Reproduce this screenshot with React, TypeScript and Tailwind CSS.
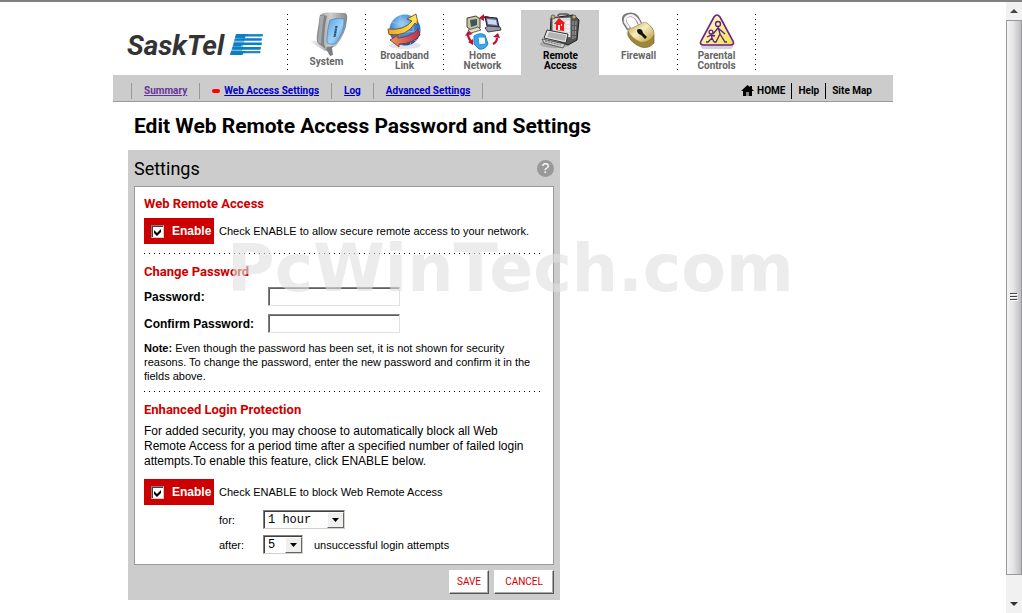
import type { ReactNode } from "react";

const narrow = "font-[Roboto,'Liberation_Sans',sans-serif]";
const dotsY = "bg-[repeating-linear-gradient(to_bottom,#000_0px,#000_1px,transparent_1px,transparent_5px)]";
const dotsX = "bg-[repeating-linear-gradient(to_right,#000_0px,#000_1px,transparent_1px,transparent_5px)]";

function Logo() {
  return (
    <svg width="136" height="32" viewBox="0 0 136 32" role="img" aria-label="SaskTel">
      <text x="0" y="26" fontFamily="Roboto, Liberation Sans, sans-serif" fontWeight="bold" fontStyle="italic" fontSize="28" fill="#333">
        SaskTel
      </text>
      <path d="M109 5h10l-1 4-1 4.500-1 4.500-2 8h-11z" fill="#7fbde2" />
      <g fill="#0a7fc4">
        <path d="M109 5h27l-.400 2.500H108.500z" />
        <path d="M108.500 7h10l-.500 2h-10zM118 9.300h17l-.500 2.500H107.500l.300-2z" />
        <path d="M107 13.500h28l-.500 2.500H106.500z" />
        <path d="M106.500 15.500h8l-.500 2h-8zM105.500 18h28.500l-.500 2.700H105z" />
        <path d="M104 22h29.500l-.500 2.300H103.500zM103.500 24h13l-1 2h-12.500z" />
      </g>
      <path d="M121 5.800h14.500M118 22.900h14" stroke="#4aa3d8" strokeWidth=".7" />
    </svg>
  );
}

function SystemIcon() {
  return (
    <svg width="42" height="44" viewBox="0 0 42 44" aria-hidden="true">
      <defs>
        <linearGradient id="sysBody" x1="0" x2="1">
          <stop offset="0" stopColor="#8d9095" />
          <stop offset=".45" stopColor="#cfd0ce" />
          <stop offset="1" stopColor="#85878a" />
        </linearGradient>
        <linearGradient id="sysFace" x1="0" y1="0" x2="1" y2="1">
          <stop offset="0" stopColor="#5b9fe0" />
          <stop offset=".55" stopColor="#9cd2f8" />
          <stop offset="1" stopColor="#4a8cd4" />
        </linearGradient>
        <linearGradient id="sysShade" x1="0" x2="1">
          <stop offset="0" stopColor="#fff" />
          <stop offset="1" stopColor="#a8a8a8" />
        </linearGradient>
      </defs>
      <path d="M3 29l10 0 9 9-3 1-8-5z" fill="url(#sysShade)" />
      <path d="M14 3Q17 0 23 .600L39 1q3 1 2 7-1 13-11 26l-5 2 1 6-3 1-2-5-9-7q-2-1-1-9z" fill="url(#sysBody)" />
      <path d="M14 3q4 0 7 1-3 12-3 28l2 5-7-5q-2-1-1-9z" fill="#808388" />
      <path d="M14 4q2-1 4 0-2 12-3 28l-2-1q-2-1 0-12z" fill="#a5a8aa" />
      <path d="M24 8q8-3 14-1 1 13-9 25-5 1-8-1 0-14 3-23z" fill="url(#sysFace)" stroke="#4c83bd" strokeWidth=".7" />
      <path d="M30 14l-2 11M31 14l-2 11" stroke="#2c4c78" strokeWidth="1.300" strokeDasharray="2 .6" />
      <path d="M21 35l7-1-2 2 1 7-3 1-2-4-2-2z" fill="#7c7e80" />
    </svg>
  );
}

function BroadbandIcon() {
  return (
    <svg width="38" height="38" viewBox="0 0 38 38" aria-hidden="true">
      <defs>
        <radialGradient id="globe" cx=".4" cy=".3" r=".75">
          <stop offset="0" stopColor="#a7d6fa" />
          <stop offset=".5" stopColor="#438ad8" />
          <stop offset="1" stopColor="#124b9c" />
        </radialGradient>
        <linearGradient id="arrowGold">
          <stop offset="0" stopColor="#f0a51e" />
          <stop offset="1" stopColor="#ffe867" />
        </linearGradient>
        <linearGradient id="arrowRust">
          <stop offset="0" stopColor="#f09358" />
          <stop offset="1" stopColor="#b52f55" />
        </linearGradient>
      </defs>
      <ellipse cx="19" cy="33.500" rx="16" ry="3.500" fill="#e1e4e8" />
      <circle cx="19" cy="18" r="15.500" fill="url(#globe)" />
      <path d="M6 10q12 5 25-2M4 18q14 4 30 0M7 28q12 3 24 0M15 3q-7 14 1 30M23 3q8 14 1 30" stroke="#8fc2ef" fill="none" strokeWidth=".8" />
      <path d="M2 17Q18 19 26 9l-5-2 9-5q2 5 1 11l-2-2Q21 25 3 22.500z" fill="url(#arrowGold)" stroke="#7c4b12" strokeWidth=".9" />
      <path d="M4 28l8-5v3q13-1 20-9l2 6q-7 9-21 9v3z" fill="url(#arrowRust)" stroke="#7c2c28" strokeWidth=".8" />
    </svg>
  );
}

function NetworkIcon() {
  return (
    <svg width="38" height="36" viewBox="0 0 38 36" aria-hidden="true">
      <g fill="none" stroke="#c41030" strokeWidth="2.200">
        <path d="M18 4q4-2 7 0" />
        <path d="M33 24q0 4-4 6" />
        <path d="M4 20q0 6 5 8" />
      </g>
      <path d="M15 4l5-4v7zM29 23l5-4 2 5zM1 22l3-5 5 3zM9 25v6l-5-3z" fill="#c41030" />
      <path d="M3 4l9-2 4 3v9L7 16l-4-3z" fill="#c9c79a" stroke="#33332b" strokeWidth=".9" />
      <path d="M6 6l7-1v6l-6 2z" fill="#3d5566" />
      <path d="M4 16l10-3 3 3-10 3z" fill="#e0dfc6" stroke="#444" strokeWidth=".8" />
      <path d="M21 3l12 1 2 9-12-1z" fill="#5f6a92" stroke="#1d1d2b" />
      <path d="M23 5l9 1 1 5-9-1z" fill="#cfd9ee" />
      <path d="M21 14l3-2 12 1 1 3-13 2z" fill="#9698ae" stroke="#222" strokeWidth=".8" />
      <path d="M10 22q6-4 11-1l3 9q-3 6-9 5l-5-5z" fill="#3aa9ec" stroke="#1b86cc" />
      <path d="M14 23l7 0 1 7-7 1z" fill="#f2fbff" stroke="#2f8fc8" />
    </svg>
  );
}

function RemoteIcon() {
  return (
    <svg width="42" height="38" viewBox="0 0 42 38" aria-hidden="true">
      <ellipse cx="15" cy="32" rx="15" ry="4" fill="#a9a9a9" />
      <path d="M11 6l22-3 6 5-2 20-9 5-18-7z" fill="#555" stroke="#1b1b1b" />
      <path d="M12 6l19-1v21l-19-3z" fill="#dcdcdc" stroke="#555" />
      <path d="M18 4q0-2 3-2h5q3 0 3 2" fill="none" stroke="#555" strokeWidth="1.500" />
      <circle cx="13" cy="5" r="2" fill="#c9b36b" stroke="#333" strokeWidth=".6" />
      <circle cx="34" cy="5" r="2" fill="#c9b36b" stroke="#333" strokeWidth=".6" />
      <path d="M14 12l5-6 6 5-1 1v7l-8-1v-6z" fill="#f01717" />
      <path d="M18 13h2v5h-2zM21 12h1v2h-1z" fill="#fff" />
      <path d="M27 9v14M29 9v14" stroke="#fff" strokeWidth="1" strokeDasharray="3 1" />
      <path d="M33 9v18M36 9l-1 17" stroke="#999" strokeWidth="1.200" strokeDasharray="4 1" />
      <path d="M7 18l21 4-2 9-22-5z" fill="#e8e8e8" stroke="#333" />
      <path d="M9 20l17 3-1 6-18-4z" fill="#b4b4b4" />
      <path d="M2 27l23 5-2 4-19-5z" fill="#ccc" stroke="#444" strokeWidth=".8" />
      <path d="M5 29l16 4" stroke="#777" strokeDasharray="2 1" />
    </svg>
  );
}

function FirewallIcon() {
  return (
    <svg width="38" height="38" viewBox="0 0 38 38" aria-hidden="true">
      <defs>
        <linearGradient id="brass" x1="0" y1="0" x2="1" y2="1">
          <stop offset="0" stopColor="#b09648" />
          <stop offset=".45" stopColor="#f7eebc" />
          <stop offset="1" stopColor="#b89a42" />
        </linearGradient>
      </defs>
      <path d="M6 20q2 11 16 15l10-1-14-7z" fill="#d8d8d8" />
      <path d="M9 17l-4-6Q2 4 9 3q6-1 9 5l2 4" fill="none" stroke="#777" strokeWidth="4.500" />
      <path d="M9 16l-4-6Q4 5 9 3.500q5-1 9 5l2 4" fill="none" stroke="#f2f2f2" strokeWidth="2.500" />
      <path d="M8 18l17-8q9 5 9 12v9q-5 6-13 4-10-4-13-12z" fill="#a0853a" stroke="#7a682c" strokeWidth=".7" />
      <path d="M8 18l17-8q8 5 9 12-4 8-13 8-10-4-13-12z" fill="url(#brass)" />
      <path d="M17 18q2-2 5 0l1 3 4 4-2 2-4-4q-4-1-4-5z" fill="#111" />
    </svg>
  );
}

function ParentalIcon() {
  return (
    <svg width="38" height="36" viewBox="0 0 38 36" aria-hidden="true">
      <defs>
        <linearGradient id="sign" x1="0" y1="0" x2="1" y2="1">
          <stop offset="0" stopColor="#fffce0" />
          <stop offset="1" stopColor="#f4e04a" />
        </linearGradient>
      </defs>
      <path d="M3 29h32q1 6-3 6H6q-4 0-3-6z" fill="#d4d2dc" />
      <path d="M16 3q3-4 6 0l13 24q2 4-3 4H6q-5 0-3-4z" fill="url(#sign)" stroke="#68218b" strokeWidth="1.600" />
      <g stroke="#54218a" fill="none" strokeWidth="1.300">
        <circle cx="20" cy="10" r="2.500" />
        <path d="M20 13l2 7-4 8h-2M22 20l5 8h2M20 14l-5 6M20 14l7 6" />
        <circle cx="13" cy="18" r="1.900" />
        <path d="M13 20l1 4-4 4H8M14 24l2 4M13 21l-4 2M13 21l4 1" />
      </g>
    </svg>
  );
}

function Tab({ children, label, active = false, divided = true }: { children: ReactNode; label: string; active?: boolean; divided?: boolean }) {
  return (
    <li className={`flex w-[78px] ${active ? "bg-[#ccc]" : ""}`}>
      <span className={`mt-1 h-[57px] w-px shrink-0 ${divided ? dotsY : ""}`} />
      <a href="#" className={`flex flex-1 flex-col items-center ${active ? "text-black" : "text-[#666]"}`}>
        <span className={`flex items-end justify-center pb-px ${label === "System" ? "h-[47px]" : "h-[41px]"}`}>{children}</span>
        <span className={`whitespace-pre text-center text-[10px] leading-[10px] font-bold ${narrow}`}>{label}</span>
      </a>
    </li>
  );
}

function NavLink({ children, visited = false }: { children: ReactNode; visited?: boolean }) {
  return (
    <a href="#" className={`underline ${visited ? "text-[#663399]" : "text-[#0000cc]"}`}>
      {children}
    </a>
  );
}

function SubHeading({ children }: { children: ReactNode }) {
  return <h3 className={`text-[13px] leading-5 font-bold text-[#c00] ${narrow}`}>{children}</h3>;
}

function Enable({ id, children }: { id: string; children: ReactNode }) {
  return (
    <div className="flex items-center gap-[5px]">
      <label htmlFor={id} className="flex h-[26px] w-[70px] items-center gap-2 bg-[#c00] pl-[7px] text-[12px] font-bold text-white">
        <span className="relative flex">
          <input
            id={id}
            type="checkbox"
            defaultChecked
            className="peer size-[13px] appearance-none border border-t-[#808080] border-r-[#d4d0c8] border-b-[#d4d0c8] border-l-[#808080] bg-white shadow-[inset_1px_1px_0_#404040]"
          />
          <svg className="pointer-events-none invisible absolute top-[3px] left-[3px] peer-checked:visible" width="8" height="8" viewBox="0 0 8 8" aria-hidden="true">
            <path d="M0 2l3 3 4-4v3L3 8 0 5z" fill="#000" />
          </svg>
        </span>
        Enable
      </label>
      <span>{children}</span>
    </div>
  );
}

function Field({ id, label }: { id: string; label: string }) {
  return (
    <div className="flex items-center">
      <label htmlFor={id} className="w-[124px] text-[12px] font-bold">
        {label}
      </label>
      <input
        id={id}
        type="password"
        className="h-[19px] w-[132px] border border-t-[#808080] border-r-[#e0e0e0] border-b-[#e0e0e0] border-l-[#808080] bg-white px-1 shadow-[inset_1px_1px_0_#606060]"
      />
    </div>
  );
}

function Select({ id, value, width }: { id: string; value: string; width: string }) {
  return (
    <span className={`relative flex ${width}`}>
      <select
        id={id}
        className="h-[19px] w-full appearance-none border border-t-[#808080] border-r-[#d4d0c8] border-b-[#d4d0c8] border-l-[#808080] bg-white pt-px pl-1 font-['Liberation_Mono',monospace] text-[12px] leading-4 text-black shadow-[inset_1px_1px_0_#404040]"
      >
        <option>{value}</option>
      </select>
      <span className="pointer-events-none absolute top-[2px] right-px flex h-4 w-[17px] items-center justify-center border border-t-white border-r-[#666] border-b-[#666] border-l-white bg-[#efefef]">
        <svg width="7" height="4" viewBox="0 0 7 4" aria-hidden="true">
          <path d="M0 0h7L3.500 4z" fill="#000" />
        </svg>
      </span>
    </span>
  );
}

function ActionButton({ children }: { children: ReactNode }) {
  return (
    <button
      type="button"
      className={`h-6 border border-t-white border-r-[#555] border-b-[#555] border-l-white bg-white text-[10px] text-[#c00] shadow-[inset_-1px_-1px_0_#aaa] ${children === "SAVE" ? "w-10" : "w-[60px]"} ${narrow}`}
    >
      {children}
    </button>
  );
}

function ScrollRail() {
  return (
    <div className="flex w-4 shrink-0 flex-col items-center bg-[#f1f1f1]" aria-hidden="true">
      <svg className="mt-[7px] mb-[6px]" width="8" height="5" viewBox="0 0 8 5">
        <path d="M4 0l4 4H0z" fill="#444" />
      </svg>
      <div className="flex w-full flex-1 items-center justify-center border border-[#999] bg-linear-to-r from-[#f4f4f4] via-[#e2e2e4] to-[#bcbcc2]">
        <svg width="8" height="9" viewBox="0 0 8 9" shapeRendering="crispEdges">
          <path d="M0 0h7v1H0zM0 3h7v1H0zM0 6h7v1H0z" fill="#444" />
          <path d="M1 1h7v1H1zM1 4h7v1H1zM1 7h7v1H1z" fill="#fff" />
        </svg>
      </div>
      <svg className="mt-[27px] mb-[6px]" width="8" height="5" viewBox="0 0 8 5">
        <path d="M0 0h8L4 4z" fill="#333" />
      </svg>
    </div>
  );
}

export default function App() {
  return (
    <div className="flex min-h-screen flex-col border-t-2 border-[#808080] bg-white font-['Liberation_Sans',Arial,sans-serif] text-[11px] leading-[14px] text-black">
      <div className="flex flex-1">
        <div className="flex-1">
          <div className="relative mx-auto max-w-[780px]">
            <header>
              <div className="flex pt-2">
                <a href="#" className="w-[174px] pt-[19px] pl-[14px]">
                  <Logo />
                </a>
                <ul className="flex h-[65px]">
                  <Tab label="System"><SystemIcon /></Tab>
                  <Tab label={"Broadband\nLink"}><BroadbandIcon /></Tab>
                  <Tab label={"Home\nNetwork"}><NetworkIcon /></Tab>
                  <Tab label={"Remote\nAccess"} active divided={false}><RemoteIcon /></Tab>
                  <Tab label="Firewall" divided={false}><FirewallIcon /></Tab>
                  <Tab label={"Parental\nControls"}><ParentalIcon /></Tab>
                  <li className={`mt-1 h-[57px] w-px ${dotsY}`} />
                </ul>
              </div>
              <nav className={`flex h-[27px] items-center justify-between border-b border-[#999] bg-[#ccc] pt-[5px] pr-[21px] pl-[18px] text-[10px] font-bold ${narrow}`}>
                <div className="flex items-center">
                  <span className="mr-3 h-4 w-px bg-[#999]" />
                  <NavLink visited>Summary</NavLink>
                  <span className="mx-3 h-4 w-px bg-[#999]" />
                  <span className="mr-1 h-1 w-2 rounded-sm bg-[#f00]" />
                  <NavLink>Web Access Settings</NavLink>
                  <span className="mx-3 h-4 w-px bg-[#999]" />
                  <NavLink>Log</NavLink>
                  <span className="mx-3 h-4 w-px bg-[#999]" />
                  <NavLink>Advanced Settings</NavLink>
                  <span className="ml-3 h-4 w-px bg-[#999]" />
                </div>
                <div className="flex items-center gap-[6px]">
                  <a href="#" className="flex items-center gap-[3px]">
                    <svg width="13" height="11" viewBox="0 0 13 11" aria-hidden="true">
                      <path d="M6.500 0L9 2V1h2v3l2 2h-2v5H2V6H0z" />
                      <path d="M5 7h3v4H5z" fill="#888" />
                    </svg>
                    HOME
                  </a>
                  <span className="h-4 w-px bg-black" />
                  <a href="#">Help</a>
                  <span className="h-4 w-px bg-black" />
                  <a href="#">Site Map</a>
                </div>
              </nav>
            </header>

            <main className="pl-[15px]">
              <h1 className={`py-2 pl-[6px] text-[21px] leading-8 font-bold ${narrow}`}>Edit Web Remote Access Password and Settings</h1>
              <form className="max-w-[432px] bg-[#ccc] px-[6px] pb-[6px]">
                <div className="flex h-9 items-center justify-between">
                  <h2 className={`pt-px text-[18px] leading-6 ${narrow}`}>Settings</h2>
                  <button type="button" aria-label="Help" className="size-[17px] rounded-full bg-[#999] text-[14px] leading-[17px] text-white">
                    ?
                  </button>
                </div>
                <div className="border border-[#999] bg-white pt-[7px] pr-3 pb-[10px] pl-[9px]">
                  <section>
                    <SubHeading>Web Remote Access</SubHeading>
                    <div className="mt-1">
                      <Enable id="enable-remote">Check ENABLE to allow secure remote access to your network.</Enable>
                    </div>
                  </section>
                  <div className={`mt-[9px] mb-2 h-px ${dotsX}`} />
                  <section>
                    <SubHeading>Change Password</SubHeading>
                    <div className="mt-[5px] mb-2 flex flex-col gap-2">
                      <Field id="password" label="Password:" />
                      <Field id="confirm" label="Confirm Password:" />
                    </div>
                    <p>
                      <b>Note:</b> Even though the password has been set, it is not shown for security reasons. To change the password, enter the new password and confirm it in the fields above.
                    </p>
                  </section>
                  <div className={`mt-2 mb-2 h-px ${dotsX}`} />
                  <section>
                    <SubHeading>Enhanced Login Protection</SubHeading>
                    <p className="mt-1 mb-[10px] text-[12px] leading-[15px]">
                      For added security, you may choose to automatically block all Web Remote Access for a period time after a specified number of failed login attempts.To enable this feature, click ENABLE below.
                    </p>
                    <Enable id="enable-block">Check ENABLE to block Web Remote Access</Enable>
                    <div className="mt-[5px] flex flex-col gap-[6px] pl-[75px]">
                      <div className="flex items-center">
                        <label htmlFor="duration" className="w-11">for:</label>
                        <Select id="duration" value="1 hour" width="w-[82px]" />
                      </div>
                      <div className="flex items-center">
                        <label htmlFor="attempts" className="w-11">after:</label>
                        <Select id="attempts" value="5" width="w-10" />
                        <span className="ml-[11px]">unsuccessful login attempts</span>
                      </div>
                    </div>
                  </section>
                </div>
                <div className="flex justify-end gap-[5px] pt-[5px]">
                  <ActionButton>SAVE</ActionButton>
                  <ActionButton>CANCEL</ActionButton>
                </div>
              </form>
            </main>
            <div className="pointer-events-none absolute top-[227px] left-[114px] font-['DejaVu_Sans',sans-serif] text-[65px] leading-[80px] font-bold text-[#dfdfdf]/60">
              PcWinTech.com
            </div>
          </div>
        </div>
        <ScrollRail />
      </div>
    </div>
  );
}
